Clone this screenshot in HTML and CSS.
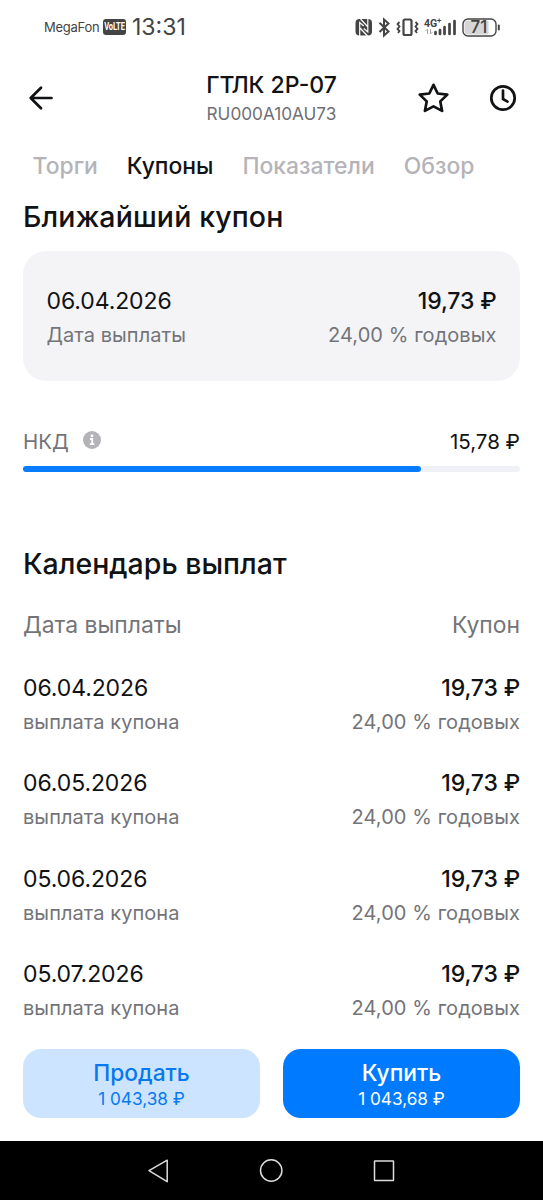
FILE: index.html
```html
<!DOCTYPE html>
<html lang="ru">
<head>
<meta charset="utf-8">
<title>ГТЛК 2P-07</title>
<link rel="stylesheet" href="styles.css">
</head>
<body>
<div class="status">
  <span class="carrier">MegaFon</span>
  <span class="volte"><span>VoLTE</span></span>
  <span class="time">13:31</span>
  <svg class="status-icons" width="150" height="26" viewBox="0 0 150 26">
    <rect x=".5" y="5" width="16.500" height="16.500" rx="4" fill="#444"/>
    <path d="M4.700 22V8.500l4 3.500M12.800 4.500V18l-4-3.500M5.500 5l7 7.500M5 14l7.500 8" fill="none" stroke="#fff" stroke-width="1.200"/>
    <path d="M24.500 8.800l9 8.700-4.500 4V5.500l4.500 4-9 8.500" fill="none" stroke="#444" stroke-width="2"/>
    <rect x="48.500" y="5.500" width="8" height="15.500" rx="1.500" fill="none" stroke="#444" stroke-width="2.200"/>
    <path d="M44.500 8l-2 2 2 2.500-2 2.500 2 2-1.500 2M60.500 8l2 2-2 2.500 2 2.500-2 2 1.500 2" fill="none" stroke="#444" stroke-width="1.800"/>
    <text x="69" y="13.300" class="net">4G</text>
    <path d="M82.200 6.500h4M84.200 4.500v4" stroke="#444" stroke-width="1"/>
    <path d="M72.500 20v-5l-2 2M75.500 15v5l2-2" fill="none" stroke="#aaa" stroke-width="1"/>
    <path d="M80.500 18v2M85 16v4M89.500 13v7M94.500 10v10M99.500 7v13" stroke="#444" stroke-width="2.700" stroke-linecap="round"/>
    <rect x="108" y="5" width="33" height="17" rx="5" fill="#fff" stroke="#444" stroke-width="1.400"/>
    <path d="M113 6.500h20.500v14H113q-3.500 0-3.500-3.500v-7q0-3.500 3.500-3.500z" fill="#d6d6d6"/>
    <path d="M143.800 11.500v4" stroke="#444" stroke-width="2" stroke-linecap="round"/>
    <text x="124" y="19.300" text-anchor="middle" class="charge">71</text>
  </svg>
</div>

<header class="header">
  <svg class="back" width="26" height="26" viewBox="0 0 26 26"><path d="M23.500 13H3M13 2.700L2.700 13 13 23.300" class="line"/></svg>
  <div class="title">
    <h1>ГТЛК 2Р-07</h1>
    <p>RU000A10AU73</p>
  </div>
  <svg class="star" width="34" height="34" viewBox="0 0 34 34"><path d="M17.500 3.800l4.200 8.700 9.600 1.100-7 6.800 1.800 9.500-8.600-4.500-8.600 4.500 1.800-9.500-7-6.800 9.600-1.100z" class="line"/></svg>
  <svg class="clock" width="28" height="28" viewBox="0 0 28 28"><circle cx="14" cy="14" r="11.700" class="line"/><path d="M14 6.500v8.500l4.500 2.600" class="line"/></svg>
</header>

<nav class="tabs">
  <span>Торги</span><span class="active">Купоны</span><span>Показатели</span><span>Обзор</span>
</nav>

<main class="content">
  <h2 class="next-title">Ближайший купон</h2>
  <section class="card">
    <div class="pair main-line"><span>06.04.2026</span><b>19,73 ₽</b></div>
    <div class="pair sub-line"><span>Дата выплаты</span><span>24,00 % годовых</span></div>
  </section>
  <section class="accrued">
    <div class="pair">
      <span class="label">НКД
        <svg width="18" height="18" viewBox="0 0 18 18"><circle cx="9" cy="9" r="9" fill="#b3b3b8"/><circle cx="9" cy="4.800" r="1.400" fill="#fff"/><path d="M7 8h2.200v5M6.800 13.200h4.600" fill="none" stroke="#fff" stroke-width="1.800"/></svg>
      </span>
      <span class="amount">15,78 ₽</span>
    </div>
    <div class="track"><div class="fill"></div></div>
  </section>

  <h2 class="calendar-title">Календарь выплат</h2>
  <div class="pair columns"><span>Дата выплаты</span><span>Купон</span></div>
  <ul class="payments">
    <li><div class="pair main-line"><span>06.04.2026</span><b>19,73 ₽</b></div><div class="pair sub-line"><span>выплата купона</span><span>24,00 % годовых</span></div></li>
    <li><div class="pair main-line"><span>06.05.2026</span><b>19,73 ₽</b></div><div class="pair sub-line"><span>выплата купона</span><span>24,00 % годовых</span></div></li>
    <li><div class="pair main-line"><span>05.06.2026</span><b>19,73 ₽</b></div><div class="pair sub-line"><span>выплата купона</span><span>24,00 % годовых</span></div></li>
    <li><div class="pair main-line"><span>05.07.2026</span><b>19,73 ₽</b></div><div class="pair sub-line"><span>выплата купона</span><span>24,00 % годовых</span></div></li>
  </ul>
</main>

<div class="actions">
  <button class="sell"><span>Продать</span><small>1 043,38 ₽</small></button>
  <button class="buy"><span>Купить</span><small>1 043,68 ₽</small></button>
</div>

<footer class="navbar">
  <svg width="543" height="59" viewBox="0 0 543 59"><g fill="none" stroke="#ddd" stroke-width="1.500" stroke-linejoin="round"><path d="M149 29.700l18.200-10.500v21.500z"/><circle cx="271.200" cy="29.500" r="10.700"/><rect x="374.500" y="20" width="19" height="19.500" rx=".5"/></g></svg>
</footer>
</body>
</html>
```

FILE: styles.css
```css
* { box-sizing: border-box; margin: 0; padding: 0; }
body {
  width: 543px;
  height: 1200px;
  overflow: hidden;
  display: flex;
  flex-direction: column;
  background: #fff;
  color: #111214;
  font-family: Inter, "Noto Sans", sans-serif;
}
.line { fill: none; stroke: #111214; stroke-width: 2.700; stroke-linecap: round; stroke-linejoin: round; }

.status { height: 53px; display: flex; align-items: center; padding: 0 38px 0 44px; color: #444; }
.carrier { width: 55px; font-size: 13px; letter-spacing: -0.250px; }
.volte {
  width: 23px; height: 16px; margin: 0 6px 0 4px; border-radius: 3px; background: #444; color: #fff;
  display: flex; align-items: center; justify-content: center;
  font: bold 7.500px/16px Roboto, sans-serif; letter-spacing: -0.100px;
}
.volte span { transform: scaleY(1.450); }
.time { font-size: 23px; letter-spacing: 0; }
.status-icons { margin-left: auto; }
.net { font: bold 10.500px Roboto, sans-serif; fill: #444; }
.charge { font: 500 17px Inter, sans-serif; fill: #444; }

.header { height: 90px; display: flex; align-items: center; padding: 0 26px 0 28px; }
.title { flex: 1; margin-left: 73px; text-align: center; padding-top: 1px; }
.title h1 { padding-top: 1px; font-size: 23px; line-height: 30px; font-weight: 500; }
.title p { font-size: 17.200px; line-height: 28px; color: #6f7075; }
.star { margin-right: 39px; }

.tabs { height: 45px; display: flex; gap: 29px; padding: 1px 0 0 32.500px; font-size: 22.900px; line-height: 45px; font-weight: 500; color: #b4b4b8; }
.tabs .active { color: #111214; }

.content { padding: 0 23px; }
h2 { font-size: 28.500px; line-height: 58px; font-weight: 500; }
.next-title { padding-bottom: 1px; letter-spacing: 0.130px; }
.pair { display: flex; justify-content: space-between; align-items: center; }
.card { height: 130px; margin-top: 4px; padding: 33px 23.500px; border-radius: 23px; background: #f4f4f7; }
.main-line { height: 34px; font-size: 23px; line-height: 34px; letter-spacing: -0.100px; }
.main-line b { font-weight: 500; letter-spacing: -0.150px; }
.sub-line { height: 34px; font-size: 20px; line-height: 34px; letter-spacing: 0.070px; color: #737479; }
.accrued { margin-top: 46px; font-size: 20.500px; line-height: 30px; }
.label { display: flex; align-items: center; gap: 14px; color: #737479; }
.label svg { margin-top: -4px; }
.track { height: 6px; margin-top: 9px; border-radius: 3px; background: #f0f1f7; }
.fill { width: 398px; height: 6px; border-radius: 3px; background: #087cff; }
.calendar-title { margin-top: 63px; }
.columns { height: 62px; padding-top: 1px; font-size: 22.900px; color: #737479; }
.payments { list-style: none; margin-top: 16px; display: flex; flex-direction: column; gap: 27.300px; }

.actions { margin-top: auto; padding: 0 23px 23px; display: flex; gap: 23px; }
.actions button {
  flex: 1; height: 69px; padding-top: 3px; border: 0; border-radius: 18px; display: flex; flex-direction: column;
  align-items: center; justify-content: center; font-family: inherit;
}
.actions span { font-size: 22.800px; line-height: 27px; font-weight: 500; }
.actions small { font-size: 17.200px; line-height: 25px; }
.sell { background: #cce4ff; color: #0878f0; }
.buy { background: #007aff; color: #fff; }
.navbar { height: 59px; background: #000; }
.navbar svg { display: block; }
```
